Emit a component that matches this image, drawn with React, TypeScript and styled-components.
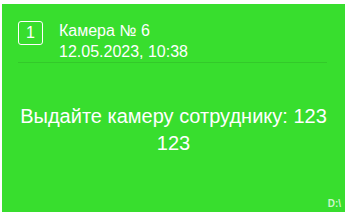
import styled, { createGlobalStyle } from 'styled-components';

const GlobalStyle = createGlobalStyle`
  html, body {
    margin: 0;
    padding: 0;
    background: #ffffff;
    overflow: hidden;
  }

  body {
    padding: 4px 0 0 2px;
    font-family: 'Liberation Sans', Arial, sans-serif;
  }
`;

const Card = styled.div`
  display: flex;
  flex-direction: column;
  box-sizing: border-box;
  width: 343px;
  height: 208px;
  background-color: #38de2e;
  color: #ffffff;
`;

const Header = styled.div`
  display: flex;
  align-items: flex-start;
  gap: 16px;
  padding: 17px 18px 0 16px;
`;

const Badge = styled.div`
  display: flex;
  align-items: center;
  justify-content: center;
  box-sizing: border-box;
  width: 25px;
  height: 24px;
  border: 1px solid #ffffff;
  border-radius: 3px;
  font-size: 16px;
`;

const Info = styled.div`
  display: flex;
  flex-direction: column;
`;

const Title = styled.div`
  font-size: 16px;
  line-height: 20px;
`;

const Timestamp = styled.div`
  font-size: 16px;
  line-height: 21px;
`;

const Divider = styled.div`
  height: 1px;
  margin: 0 18px 0 16px;
  background-color: #33c92a;
`;

const Message = styled.div`
  padding: 40px 16px 0;
  text-align: center;
  font-size: 20px;
  line-height: 27px;
`;

const Footer = styled.div`
  display: flex;
  justify-content: flex-end;
  margin-top: auto;
  padding: 0 4px 3px 0;
  font-size: 10px;
  line-height: 10px;
  font-weight: bold;
  color: rgba(255, 255, 255, 0.75);
`;

export default function App() {
  return (
    <>
      <GlobalStyle />
      <Card>
        <Header>
          <Badge>1</Badge>
          <Info>
            <Title>Камера № 6</Title>
            <Timestamp>12.05.2023, 10:38</Timestamp>
          </Info>
        </Header>
        <Divider />
        <Message>Выдайте камеру сотруднику: 123 123</Message>
        <Footer>D:\</Footer>
      </Card>
    </>
  );
}
